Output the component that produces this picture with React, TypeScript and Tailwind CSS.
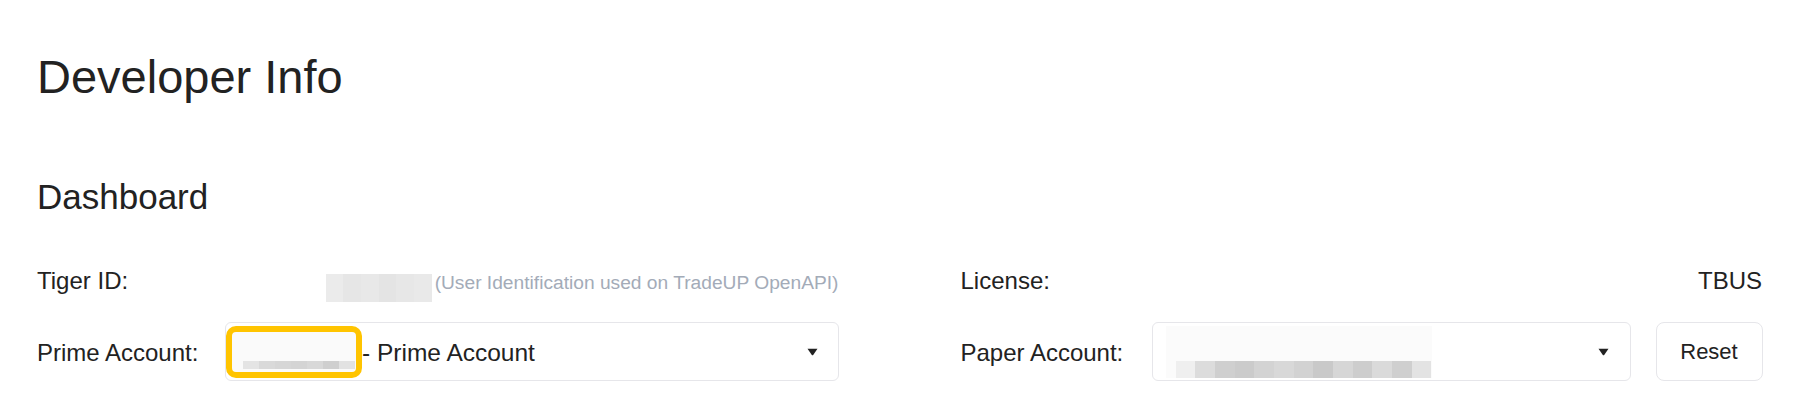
import React from "react";

function Caret() {
  return (
    <svg width="11" height="8" viewBox="0 0 11 8" className="shrink-0">
      <path d="M0.5 0.8 H10.5 L6.2 6.9 Q5.5 7.8 4.8 6.9 Z" fill="#222" />
    </svg>
  );
}

export default function App() {
  const tigerSegs = ["#ebebeb", "#e6e6e6", "#e8e8e8", "#e4e4e4", "#e7e7e7", "#e9e9e9"];
  const primeSegs = ["#e4e4e4", "#d9d9d9", "#d6d6d6", "#d4d4d4", "#d8d8d8", "#cfcfcf", "#e2e2e2"];
  const paperSegs = [
    "#efefef", "#dcdcdc", "#cfcfcf", "#cbcbcb", "#d3d3d3", "#d8d8d8", "#d2d2d2",
    "#c9c9c9", "#d6d6d6", "#cdcdcd", "#dadada", "#cfcfcf", "#e3e3e3",
  ];
  return (
    <div className="min-h-screen bg-white pl-[37px] pr-[40px] pt-[49px] font-['Liberation_Sans',Arial,sans-serif] text-[#222]">
      <h1 className="text-[47px] leading-[56px] font-normal">Developer Info</h1>
      <h2 className="mt-[71px] text-[35px] leading-[42px] font-normal">Dashboard</h2>

      <div className="mt-[40px] grid grid-cols-2 gap-x-[122px] gap-y-[18px]">
        {/* Row 1 left */}
        <div className="flex h-[46px] items-center justify-between">
          <span className="text-[24px] leading-[32px]">Tiger ID:</span>
          <div className="flex items-center">
            <div className="mt-[14px] flex h-[28px] w-[106px]">
              {tigerSegs.map((c, i) => (
                <div key={i} className="h-full flex-1" style={{ backgroundColor: c }} />
              ))}
            </div>
            <span className="ml-[3px] mt-[4px] text-[19.2px] leading-[24px] text-[#a3abb8]">
              (User Identification used on TradeUP OpenAPI)
            </span>
          </div>
        </div>

        {/* Row 1 right */}
        <div className="flex h-[46px] items-center justify-between">
          <span className="text-[24px] leading-[32px]">License:</span>
          <span className="text-[24px] leading-[32px]">TBUS</span>
        </div>

        {/* Row 2 left */}
        <div className="flex h-[59px] items-center">
          <span className="w-[188px] shrink-0 pt-[2px] text-[24px] leading-[32px]">Prime Account:</span>
          <div className="flex h-[59px] flex-1 items-center rounded-[6px] border border-[#e6e6ea] pr-[20px]">
            <div className="h-[52px] w-[136px] shrink-0 rounded-[10px] border-[6px] border-[#ffc400] bg-[#fafafa] pl-[11px] pt-[29px]">
              <div className="flex h-[8px] w-[112px]">
                {primeSegs.map((c, i) => (
                  <div key={i} className="h-full flex-1" style={{ backgroundColor: c }} />
                ))}
              </div>
            </div>
            <span className="pt-[2px] text-[24.5px] leading-[32px]">- Prime Account</span>
            <div className="ml-auto">
              <Caret />
            </div>
          </div>
        </div>

        {/* Row 2 right */}
        <div className="flex h-[59px] items-center">
          <span className="w-[191px] shrink-0 pt-[2px] text-[24px] leading-[32px]">Paper Account:</span>
          <div className="flex h-[59px] w-[479px] shrink-0 items-center rounded-[6px] border border-[#e6e6ea] pl-[13px] pr-[21px]">
            <div className="flex h-[52px] w-[266px] flex-col justify-end bg-[#fbfbfb] pl-[10px]">
              <div className="flex h-[17px] w-full">
                {paperSegs.map((c, i) => (
                  <div key={i} className="h-full flex-1" style={{ backgroundColor: c }} />
                ))}
              </div>
            </div>
            <div className="ml-auto">
              <Caret />
            </div>
          </div>
          <button className="ml-[25px] h-[59px] w-[107px] shrink-0 rounded-[8px] border border-[#e6e6ea] bg-white pt-[1px] text-[22px] leading-[28px] text-[#222]">
            Reset
          </button>
        </div>
      </div>
    </div>
  );
}
